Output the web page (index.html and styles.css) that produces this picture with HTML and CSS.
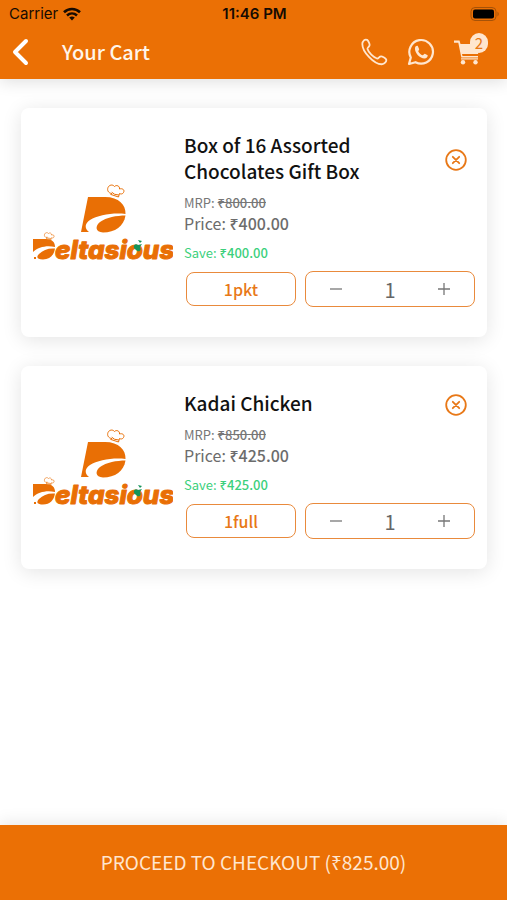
FILE: index.html
```html
<!DOCTYPE html>
<html lang="en">
<head>
<meta charset="utf-8">
<meta name="viewport" content="width=device-width, initial-scale=1">
<title>Your Cart</title>
<link rel="stylesheet" href="styles.css">
</head>
<body>
<svg class="defs" aria-hidden="true">
  <defs>
    <g id="hat" fill="none" stroke="#e96f05" stroke-linecap="round" stroke-linejoin="round">
      <path d="M4.500 9.500C1 9 0 6 1 3.500C2 1 5.500 0 7.500 2.500C9.500 .5 13 2 12.500 5C15.500 4 18 6 16.500 8.500C15.500 10.500 13.500 10 12.500 9.500L11.500 13L4 10.500Z"/>
      <path d="M5 8.500Q7 11 11.500 11"/>
    </g>
    <g id="letter-d" fill="#e96f05">
      <path d="M7 0H24C38 0 45 8 44.500 17C32 15.500 17 18 9 23C4 26.500 3 31 8 35H0Z"/>
      <path d="M44.500 18.500C43 29 34 35.500 22 35.500C14 35 14 29 19 25C25 20.500 36 18.500 44.500 18.500Z"/>
    </g>
    <symbol id="logo" viewBox="0 -6 140 86">
      <use href="#hat" transform="translate(74 1)"/>
      <use href="#letter-d" transform="translate(48 14)"/>
      <use href="#hat" transform="translate(11 49) scale(.6)"/>
      <path fill="#e96f05" d="M0 56H13C19 56 22 59 22 64C14 62 5 64 0 69Z"/>
      <path fill="#e96f05" d="M22 65.500C21 72 17 76.500 10 76.500C4 76.500 3 74 6 71C10 67 15 65 22 65.500ZM1 74h2v2H1Z"/>
      <text class="wordmark" x="22" y="76">eltasious</text>
      <path fill="#16945a" d="M101 65C100 62 103 60 105 62L109 61L107 64C109 67 106 70 103 67ZM105 57L109 58L107 60Z"/>
    </symbol>
  </defs>
</svg>

<header class="top">
  <div class="status">
    <div class="carrier">
      <span>Carrier</span>
      <svg width="18" height="14" viewBox="0 0 18 14" fill="none" stroke="#160b02" stroke-width="2.600" aria-hidden="true">
        <path d="M1 5.200C5.500 .9 12.500 .9 17 5.200"/>
        <path d="M4 8.500C7 5.800 11 5.800 14 8.500"/>
        <path d="M6.200 10.600Q9 8.400 11.800 10.600L9 13.500Z" fill="#160b02" stroke="none"/>
      </svg>
    </div>
    <span class="clock">11:46 PM</span>
    <div class="battery">
      <svg width="30" height="14" viewBox="0 0 30 14" aria-hidden="true">
        <rect x="1" y=".5" width="25" height="13" rx="4" fill="none" stroke="#a65208" />
        <rect x="3" y="2.500" width="21" height="9" rx="2" fill="#000"/>
        <path d="M27.500 4.500Q30 7 27.500 9.500Z" fill="#a65208"/>
      </svg>
    </div>
  </div>
  <nav class="bar">
    <button class="icon-btn back" type="button" aria-label="Back">
      <svg width="18" height="28" viewBox="0 0 18 28" fill="none" stroke="#fff" stroke-width="4" stroke-linecap="round" stroke-linejoin="round"><path d="M14 3L3 14L14 25"/></svg>
    </button>
    <h1>Your Cart</h1>
    <div class="actions">
      <a class="icon-btn" href="#call" aria-label="Call">
        <svg width="28" height="28" viewBox="0 0 28 28" fill="none" stroke="#ffe6cf" stroke-width="1.800" stroke-linejoin="round"><path d="M2.500 4.500C3.500 2.500 5.500 1.200 7 1.800C8.500 3 10 6 9.500 7.500C9 9 7.200 9.500 7.500 11C8.500 14.500 13.500 19.500 17 20.500C18.500 20.800 19 18.800 20.500 18.500C22 18 25.500 20 26.200 21.500C26.800 23.500 24.500 25.800 22.500 26.200C14.500 27 1 13 2.500 4.500Z"/></svg>
      </a>
      <a class="icon-btn" href="#chat" aria-label="WhatsApp">
        <svg width="28" height="28" viewBox="0 0 28 28" fill="none" stroke="#ffe6cf" stroke-width="2.200" stroke-linejoin="round"><path d="M2 26L3.800 19.500A11.800 11.800 0 1 1 8.500 24.200Z"/><path fill="#ffe6cf" stroke="none" d="M8 10C8.300 8.300 9.500 7.500 10.800 8L12.200 11.200C12.200 12 11 12.800 11.300 13.400C12.300 15.200 13.800 16.600 15.500 17.200C16.500 17.300 17 15.800 17.800 15.800L20.700 17.300C20.800 19 19.500 20.500 17.500 20.600C13 20.500 7.500 15 8 10Z"/></svg>
      </a>
      <a class="icon-btn cart" href="#cart" aria-label="Cart, 2 items">
        <svg width="28" height="28" viewBox="0 0 28 28" fill="#ffe6cf"><path d="M0 2.500H5.500L6.500 6H26L24 16H8L8.500 18H24V19.500H7.300L4.300 4.800H0Z"/><path d="M7 20.300H24V21.500H7Z"/><circle cx="9" cy="24.300" r="2.200"/><circle cx="21.500" cy="24.300" r="2.200"/></svg>
        <span class="badge">2</span>
      </a>
    </div>
  </nav>
</header>

<main class="items">
  <article class="card">
    <svg class="logo" role="img" aria-label="Deltasious"><use href="#logo"/></svg>
    <div class="info">
      <div class="head">
        <h2>Box of 16 Assorted Chocolates Gift Box</h2>
        <button class="icon-btn remove" type="button" aria-label="Remove Box of 16 Assorted Chocolates Gift Box">
          <svg width="22" height="22" viewBox="0 0 22 22" fill="none" stroke="#e87817" stroke-width="1.800" stroke-linecap="round"><circle cx="11" cy="11" r="9.800"/><path d="M7.800 7.800L14.200 14.200M14.200 7.800L7.800 14.200"/></svg>
        </button>
      </div>
      <p class="mrp">MRP: <s>₹800.00</s></p>
      <p class="price">Price: <b>₹400.00</b></p>
      <p class="save">Save: <b>₹400.00</b></p>
      <div class="options">
        <button class="unit" type="button">1pkt</button>
        <div class="qty">
          <button type="button" aria-label="Decrease"><svg width="12" height="12" viewBox="0 0 12 12" stroke="#777" stroke-width="1.300"><path d="M0 6H12"/></svg></button>
          <output>1</output>
          <button type="button" aria-label="Increase"><svg width="12" height="12" viewBox="0 0 12 12" stroke="#777" stroke-width="1.300"><path d="M0 6H12M6 0V12"/></svg></button>
        </div>
      </div>
    </div>
  </article>

  <article class="card">
    <svg class="logo" role="img" aria-label="Deltasious"><use href="#logo"/></svg>
    <div class="info">
      <div class="head">
        <h2>Kadai Chicken</h2>
        <button class="icon-btn remove" type="button" aria-label="Remove Kadai Chicken">
          <svg width="22" height="22" viewBox="0 0 22 22" fill="none" stroke="#e87817" stroke-width="1.800" stroke-linecap="round"><circle cx="11" cy="11" r="9.800"/><path d="M7.800 7.800L14.200 14.200M14.200 7.800L7.800 14.200"/></svg>
        </button>
      </div>
      <p class="mrp">MRP: <s>₹850.00</s></p>
      <p class="price">Price: <b>₹425.00</b></p>
      <p class="save">Save: <b>₹425.00</b></p>
      <div class="options">
        <button class="unit" type="button">1full</button>
        <div class="qty">
          <button type="button" aria-label="Decrease"><svg width="12" height="12" viewBox="0 0 12 12" stroke="#777" stroke-width="1.300"><path d="M0 6H12"/></svg></button>
          <output>1</output>
          <button type="button" aria-label="Increase"><svg width="12" height="12" viewBox="0 0 12 12" stroke="#777" stroke-width="1.300"><path d="M0 6H12M6 0V12"/></svg></button>
        </div>
      </div>
    </div>
  </article>
</main>

<button class="checkout" type="button">PROCEED TO CHECKOUT (₹825.00)</button>
</body>
</html>
```
FILE: styles.css
```css
* { box-sizing: border-box; }

body {
  margin: 0;
  min-height: 100vh;
  display: flex;
  flex-direction: column;
  background: #fff;
  color: #111;
  font-family: "Noto Sans CJK SC", "Noto Sans", sans-serif;
}

h1, h2, p { margin: 0; font-weight: 500; }

button { font-family: inherit; cursor: pointer; }

.defs { position: absolute; width: 0; height: 0; }

.top {
  background: #eb7005;
  box-shadow: 0 2px 16px rgba(0, 0, 0, .14);
}

.status {
  display: grid;
  grid-template-columns: 1fr auto 1fr;
  align-items: center;
  height: 27px;
  padding: 0 7px 0 9px;
  color: #160b02;
  font: 15px/27px Inter, "Liberation Sans", sans-serif;
}

.carrier { display: flex; align-items: center; gap: 5px; }
.clock { font-weight: 600; }
.battery { display: flex; justify-content: flex-end; }

.bar {
  display: flex;
  align-items: center;
  height: 52px;
  padding: 0 18px 2px 12px;
}

.bar h1 {
  margin-left: 32px;
  color: #fff5ea;
  font-size: 20px;
  line-height: 26px;
}

.actions {
  display: flex;
  gap: 19px;
  margin-left: auto;
}

.icon-btn {
  display: flex;
  padding: 0;
  border: 0;
  background: none;
}

.cart { position: relative; width: 35px; }

.badge {
  position: absolute;
  top: -5px;
  right: 1px;
  width: 18px;
  height: 20px;
  border-radius: 9px;
  background: #ffe6cf;
  color: #e87817;
  font-size: 15px;
  line-height: 20px;
  text-align: center;
}

.items {
  flex: 1;
  display: flex;
  flex-direction: column;
  gap: 29px;
  padding: 29px 20px 29px 21px;
}

.card {
  display: flex;
  align-items: center;
  gap: 11px;
  padding: 24px 12px 30px;
  border-radius: 8px;
  background: #fff;
  box-shadow: 0 3px 20px rgba(0, 0, 0, .11);
}

.logo { flex: none; width: 140px; height: 86px; }

.wordmark {
  fill: #e96f05;
  stroke: #e96f05;
  stroke-width: 1px;
  stroke-linejoin: round;
  font: italic 800 26px Inter, sans-serif;
}

.info { flex: 1; min-width: 0; }

.head {
  display: flex;
  align-items: center;
  justify-content: space-between;
  padding-right: 8px;
}

.head h2 {
  max-width: 200px;
  font-size: 19px;
  line-height: 26px;
}

.remove { padding-top: 3px; }

.mrp, .save { font-size: 13px; line-height: 18px; font-weight: 400; }
.mrp { margin-top: 10px; color: #777; }
.mrp s, .info b { font-weight: 500; }
.price {
  color: #6c6c6c;
  font-size: 16px;
  line-height: 22px;
  font-weight: 400;
}
.save { margin-top: 10px; color: #3cd07c; }

.options {
  display: grid;
  grid-template-columns: 110px 1fr;
  align-items: center;
  gap: 9px;
  margin-top: 9px;
  padding-left: 2px;
}

.unit, .qty {
  border: 1px solid #e98a3c;
  border-radius: 8px;
  background: #fff;
}

.unit {
  height: 34px;
  padding: 0;
  color: #e87817;
  font-size: 16px;
  font-weight: 500;
}

.qty {
  display: flex;
  align-items: center;
  justify-content: space-between;
  height: 36px;
  padding: 0 14px;
  color: #666;
  font-size: 20px;
}

.qty button {
  display: flex;
  align-items: center;
  justify-content: center;
  width: 32px;
  height: 32px;
  padding: 0;
  border: 0;
  background: none;
}

.checkout {
  position: sticky;
  bottom: 0;
  height: 75px;
  padding: 0 6px 2px;
  border: 0;
  background: #eb7005;
  box-shadow: 0 -2px 16px rgba(0, 0, 0, .1);
  color: #ffe6cf;
  font-size: 19px;
}
```
